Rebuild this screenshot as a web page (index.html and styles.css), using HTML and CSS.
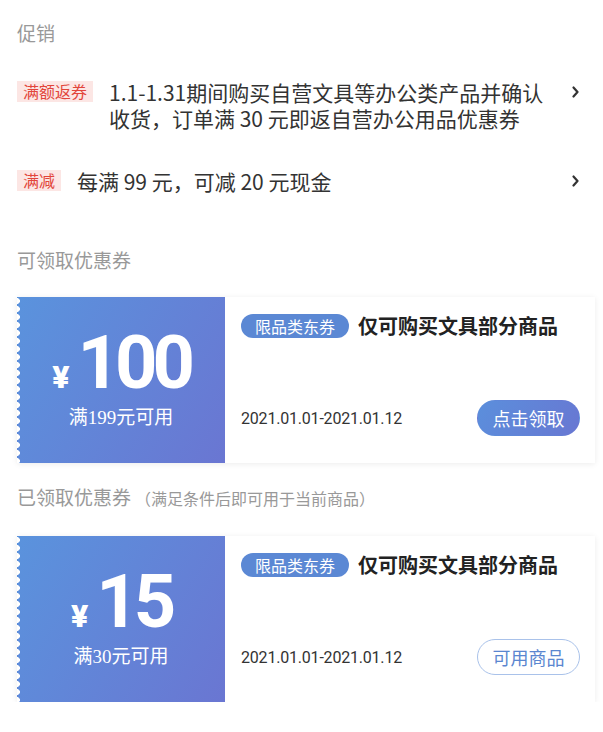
FILE: index.html
```html
<!DOCTYPE html>
<html lang="zh-CN">
  <head>
    <meta charset="UTF-8">
    <meta name="viewport" content="width=device-width, initial-scale=1.0">
    <title>促销与优惠券</title>
    <link rel="stylesheet" href="styles.css">
  </head>
  <body>
    <div class="page">
      <h2 class="sec-title first">促销</h2>

      <div class="promo promo-long">
        <span class="tag">满额返券</span>
        <p class="promo-text">1.1-1.31期间购买自营文具等办公类产品并确认收货，订单满 30 元即返自营办公用品优惠券</p>
        <svg class="arrow" width="7" height="12" viewBox="0 0 7 12"><path d="M1.5 1.5 L5.5 6 L1.5 10.5" fill="none" stroke="#333" stroke-width="2.2" stroke-linecap="round" stroke-linejoin="round"/></svg>
      </div>

      <div class="promo promo-short">
        <span class="tag">满减</span>
        <p class="promo-text">每满 99 元，可减 20 元现金</p>
        <svg class="arrow" width="7" height="12" viewBox="0 0 7 12"><path d="M1.5 1.5 L5.5 6 L1.5 10.5" fill="none" stroke="#333" stroke-width="2.2" stroke-linecap="round" stroke-linejoin="round"/></svg>
      </div>

      <h2 class="sec-title second">可领取优惠券</h2>

      <div class="coupon">
        <div class="coupon-value">
          <div class="amount"><span class="yen">¥</span>100</div>
          <div class="cond">满199元可用</div>
        </div>
        <div class="coupon-info">
          <div class="info-top">
            <span class="pill">限品类东券</span>
            <span class="coupon-name">仅可购买文具部分商品</span>
          </div>
          <div class="info-bottom">
            <span class="date">2021.01.01-2021.01.12</span>
            <span class="btn btn-get">点击领取</span>
          </div>
        </div>
      </div>

      <h2 class="sec-title third">已领取优惠券<span class="sub">（满足条件后即可用于当前商品）</span></h2>

      <div class="coupon">
        <div class="coupon-value">
          <div class="amount"><span class="yen">¥</span>15</div>
          <div class="cond">满30元可用</div>
        </div>
        <div class="coupon-info">
          <div class="info-top">
            <span class="pill">限品类东券</span>
            <span class="coupon-name">仅可购买文具部分商品</span>
          </div>
          <div class="info-bottom">
            <span class="date">2021.01.01-2021.01.12</span>
            <span class="btn btn-line">可用商品</span>
          </div>
        </div>
      </div>
    </div>
  </body>
</html>
```

FILE: styles.css
```css
body {
  margin: 0;
  background: #fff;
  font-family: "Noto Sans CJK SC", "Noto Sans", sans-serif;
  color: #333;
}
.page {
  padding: 0 8px 0 17px;
}

/* section titles */
.sec-title {
  margin: 0;
  font-size: 19px;
  font-weight: 400;
  line-height: 26px;
  color: #999;
}
.sec-title.first { padding-top: 20px; }
.sec-title.second { margin-top: 53px; }
.sec-title.third { margin-top: 21px; }
.sec-title .sub {
  font-size: 16px;
  margin-left: 4px;
}

/* promotions */
.promo {
  display: flex;
  align-items: flex-start;
  gap: 16px;
}
.promo-long { margin-top: 33px; }
.promo-short { margin-top: 37px; }
.tag {
  flex: none;
  margin-top: 2px;
  padding: 0 6px;
  font-size: 16px;
  line-height: 21px;
  background: #fce6e4;
  color: #e2453a;
}
.promo-text {
  flex: 1;
  margin: 0;
  font-size: 21px;
  line-height: 26px;
  color: #333;
}
.arrow {
  flex: none;
  margin: 7px 16px 0 8px;
}

/* coupons */
.coupon {
  display: flex;
  height: 166px;
  margin-top: 24px;
  background: #fff;
  box-shadow: 0 1px 6px rgba(0, 0, 0, 0.08);
}
.third + .coupon { margin-top: 25px; }
.coupon-value {
  position: relative;
  flex: none;
  width: 208px;
  display: flex;
  flex-direction: column;
  align-items: center;
  background: linear-gradient(120deg, #5a93dd 0%, #6a76d2 100%);
  color: #fff;
}
.coupon-value::before {
  content: "";
  position: absolute;
  left: 0;
  top: 0;
  bottom: 0;
  width: 4px;
  background: radial-gradient(circle at 0 50%, #fff 2.6px, transparent 3.2px);
  background-size: 4px 8px;
}
.amount {
  height: 70px;
  margin-top: 31px;
  font-family: Roboto, "Liberation Sans", sans-serif;
  font-weight: 700;
  font-size: 74px;
  line-height: 70px;
  letter-spacing: -5px;
}
.yen {
  font-size: 32px;
  font-weight: 900;
  line-height: 1;
  letter-spacing: 0;
  margin-right: 8px;
}
.cond {
  margin-top: 7px;
  font-family: "Liberation Serif", "Noto Sans CJK SC", serif;
  font-size: 19px;
  line-height: 26px;
}
.coupon-info {
  flex: 1;
  display: flex;
  flex-direction: column;
  justify-content: space-between;
  padding: 17px 15px 27px 16px;
}
.info-top {
  display: flex;
  align-items: center;
  gap: 9px;
  height: 24px;
}
.pill {
  padding: 0 14px;
  font-size: 16px;
  line-height: 24px;
  border-radius: 12px;
  background: #5b88d4;
  color: #fff;
}
.coupon-name {
  font-size: 20px;
  font-weight: 700;
  line-height: 24px;
  color: #222;
}
.info-bottom {
  display: flex;
  align-items: center;
  justify-content: space-between;
}
.date {
  font-family: Roboto, "Liberation Sans", sans-serif;
  font-size: 16px;
  letter-spacing: -0.2px;
  color: #333;
}
.btn {
  box-sizing: border-box;
  width: 103px;
  height: 36px;
  border-radius: 18px;
  font-size: 18px;
  line-height: 34px;
  text-align: center;
}
.btn-get {
  background: linear-gradient(120deg, #5b8fdc, #6877d2);
  color: #fff;
  border: 1px solid transparent;
}
.btn-line {
  border: 1px solid #a9c2ea;
  color: #5a86d0;
  background: #fff;
}
```
